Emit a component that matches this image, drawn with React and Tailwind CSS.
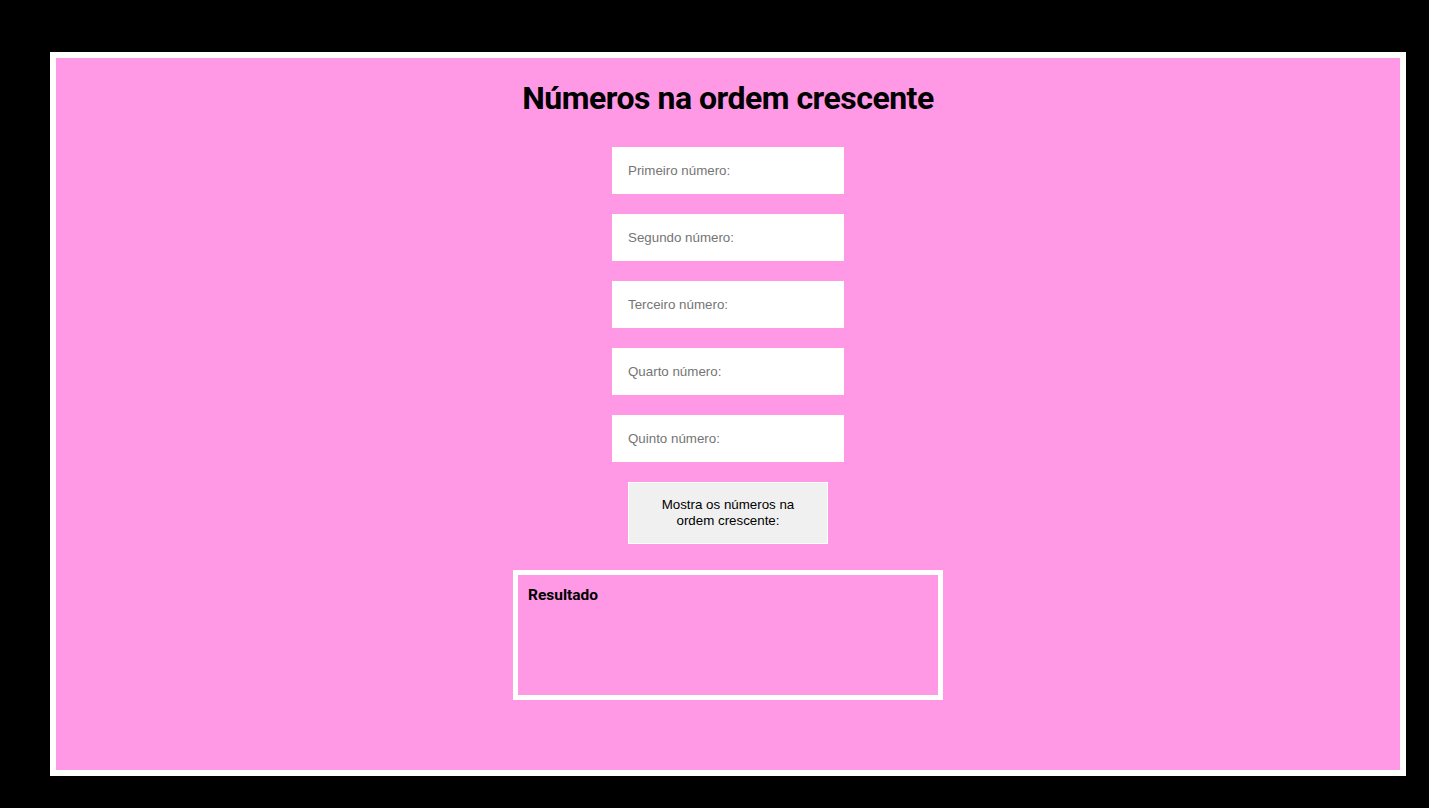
export default function App() {
  const campos = ['Primeiro número:', 'Segundo número:', 'Terceiro número:', 'Quarto número:', 'Quinto número:'];

  return (
    <div className="min-h-[808px] bg-black pt-[52px] pl-[50px] pr-[23px] pb-[32px]" style={{ fontFamily: '"Liberation Sans", Arial, sans-serif' }}>
      <div className="h-[724px] border-[6px] border-white bg-[#ff99e6] flex flex-col items-center">
        <h1 className="mt-[20px] text-[32px] leading-[40px] font-bold text-black tracking-[-0.5px]" style={{ fontFamily: 'Roboto, "Liberation Sans", sans-serif' }}>
          Números na ordem crescente
        </h1>

        <div className="mt-[29px] flex flex-col gap-[20px]">
          {campos.map((c) => (
            <input
              key={c}
              type="text"
              placeholder={c}
              className="w-[232px] h-[47px] bg-white px-4 text-[13.33px] text-black placeholder:text-[#757575] outline-none"
            />
          ))}
        </div>

        <button className="mt-[20px] w-[200px] h-[62px] bg-[#f0f0f0] border border-white text-[13.33px] leading-[16px] text-black px-5">
          Mostra os números na ordem crescente:
        </button>

        <div className="mt-[26px] w-[430px] h-[130px] border-[5px] border-white px-[10px] pt-[11px]">
          <p className="text-[15.5px] leading-[18px] font-bold text-black" style={{ fontFamily: 'Roboto, "Liberation Sans", sans-serif' }}>Resultado</p>
        </div>
      </div>
    </div>
  );
}
